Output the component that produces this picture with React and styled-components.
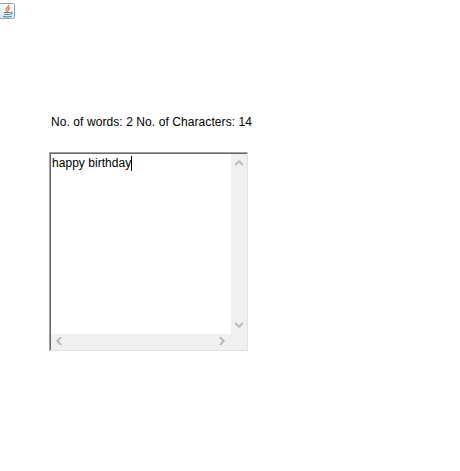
import React from 'react';
import styled, { createGlobalStyle } from 'styled-components';

const GlobalStyle = createGlobalStyle`
  * { box-sizing: border-box; }
  body { margin: 0; background: #fff; overflow: hidden; }
`;

const Window = styled.main`
  display: flex;
  flex-direction: column;
  width: 460px;
  height: 471px;
  background: #fff;
  color: #000;
  font: 12px/14px "Liberation Sans", Arial, sans-serif;
`;

const TitleBar = styled.header`
  height: 30px;
  padding-top: 3px;
`;

const JavaIcon = styled.svg`
  display: block;
  width: 15px;
  height: 16px;
`;

const Content = styled.section`
  display: flex;
  flex-direction: column;
  padding: 85px 0 0 49px;
`;

const CountLabel = styled.div`
  height: 37px;
  padding-left: 2px;
  white-space: pre;
  letter-spacing: 0.08px;
`;

const TextArea = styled.div`
  width: 199px;
  height: 199px;
  border: 1px solid;
  border-color: #a0a0a0 #e3e3e3 #e3e3e3 #a0a0a0;
`;

const InnerFrame = styled.div`
  display: grid;
  grid-template: 180px 16px / 180px 16px;
  width: 197px;
  height: 197px;
  border: solid #696969;
  border-width: 1px 0 0 1px;
`;

const Editor = styled.div`
  display: flex;
  align-items: flex-start;
  padding: 2px 0 0 1px;
  background: #fff;
  letter-spacing: 0.04px;
`;

const Caret = styled.span`
  width: 1px;
  height: 15px;
  background: #000;
`;

const ScrollBar = styled.div`
  display: flex;
  flex-direction: ${({ $vertical }) => ($vertical ? 'column' : 'row')};
  justify-content: space-between;
  align-items: center;
  padding: ${({ $vertical }) => ($vertical ? '6px 0 6px 0' : '0 6px 2px 5px')};
  background: #f0f0f0;
`;

const Corner = styled.div`
  background: #f0f0f0;
`;

const Arrow = styled.svg`
  display: block;
  flex: none;
  width: ${({ $vertical }) => ($vertical ? 8 : 6)}px;
  height: ${({ $vertical }) => ($vertical ? 6 : 8)}px;
  margin-left: ${({ $vertical }) => ($vertical ? -1 : 0)}px;
  fill: #b9b9b9;
`;

export default function App() {
  return (
    <>
      <GlobalStyle />
      <Window>
        <TitleBar>
          <JavaIcon viewBox="0 0 15 16">
            <defs>
              <linearGradient id="tile" x1="0" y1="0" x2="0" y2="1">
                <stop offset="0" stopColor="#ffffff" />
                <stop offset="1" stopColor="#dce6ee" />
              </linearGradient>
            </defs>
            <rect x="-.5" y=".5" width="15" height="15" rx="1" fill="url(#tile)" stroke="#8fa5b4" />
            <path d="M8.5 1.8C9.8 4 4.8 5 6.2 7.2L7.5 8.8M10 4.5C7.5 5.5 8 6.5 8.5 8" fill="none" stroke="#e8803c" strokeWidth="1.4" />
            <path d="M4 9.5h6M4.5 11.5h5M3 13.3c2.5.8 6 .8 8.5 0M10.5 9.5c2-.6 2 1.3 0 1.7" fill="none" stroke="#4d7a9b" strokeWidth="1.1" />
          </JavaIcon>
        </TitleBar>
        <Content>
          <CountLabel>No. of words: 2 No. of Characters: 14</CountLabel>
          <TextArea>
            <InnerFrame>
              <Editor>
                <span>happy birthday</span>
                <Caret />
              </Editor>
              <ScrollBar $vertical>
                <Arrow $vertical viewBox="0 0 8 6"><path d="M4 0L8 3.7V6.2L4 2.8 0 6.2V3.7z" /></Arrow>
                <Arrow $vertical viewBox="0 0 8 6"><path d="M4 6L8 2.3V-.2L4 3.2 0-.2v2.5z" /></Arrow>
              </ScrollBar>
              <ScrollBar>
                <Arrow viewBox="0 0 6 8"><path d="M0 4L3.7 0H6.2L2.8 4 6.2 8H3.7z" /></Arrow>
                <Arrow viewBox="0 0 6 8"><path d="M6 4L2.3 0H-.2L3.2 4-.2 8h2.5z" /></Arrow>
              </ScrollBar>
              <Corner />
            </InnerFrame>
          </TextArea>
        </Content>
      </Window>
    </>
  );
}
